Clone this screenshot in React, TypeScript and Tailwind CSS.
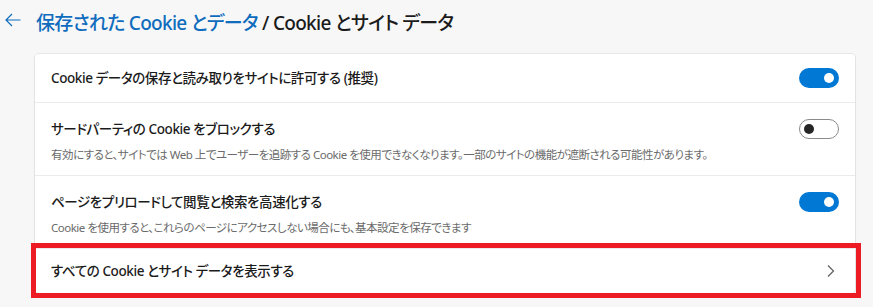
import React from "react";

const font = {
  fontFamily: '"Noto Sans", "Noto Sans CJK JP", sans-serif',
};

function Toggle({ on }: { on: boolean }) {
  return on ? (
    <div className="flex h-[20px] w-[40px] items-center justify-end rounded-full bg-[#0078d4] pr-[5px]">
      <div className="h-[10px] w-[10px] rounded-full bg-white" />
    </div>
  ) : (
    <div className="flex h-[20px] w-[40px] items-center rounded-full border border-[#8a8a8a] bg-white pl-[4px]">
      <div className="h-[10px] w-[10px] rounded-full bg-[#262626]" />
    </div>
  );
}

export default function App() {
  return (
    <div
      className="h-[307px] w-full overflow-hidden bg-[#f7f7f7] text-[#1b1b1b] [font-feature-settings:'palt']"
      style={font}
    >
      <div className="flex h-[42px] items-center">
        <svg
          width="16"
          height="14"
          viewBox="0 0 16 14"
          className="ml-[5px] mt-[-2px]"
          fill="none"
          stroke="#0f6cbd"
          strokeWidth="1.2"
        >
          <path d="M15.5 7H1M7 1L1 7l6 6" />
        </svg>
        <div className="ml-[15px] mt-[3px] text-[19px] font-medium leading-[28px] tracking-[-0.7px]">
          <span className="text-[#0f6cbd]">保存された Cookie とデータ</span>
          <span className="text-[#1b1b1b]"> / Cookie とサイト データ</span>
        </div>
      </div>

      <div className="ml-[35px] mt-[12px] w-[820px] rounded-[4px] bg-white shadow-[0_0_0_1px_rgba(0,0,0,0.06),0_1px_2px_rgba(0,0,0,0.08)]">
        <div className="flex h-[48px] items-center justify-between pl-[16px] pr-[16px]">
          <span className="text-[13.5px] font-medium leading-[20px] tracking-[-0.4px]">
            Cookie データの保存と読み取りをサイトに許可する (推奨)
          </span>
          <Toggle on />
        </div>

        <div className="border-t border-[#ebebeb] pb-[12px] pl-[16px] pr-[16px] pt-[16px]">
          <div className="flex h-[20px] items-center justify-between">
            <span className="text-[13.5px] font-medium leading-[20px] tracking-[-0.4px]">
              サードパーティの Cookie をブロックする
            </span>
            <Toggle on={false} />
          </div>
          <div className="mt-[8px] text-[11.5px] leading-[16px] tracking-[-0.5px] text-[#6b6b6b]">
            有効にすると、サイトでは Web 上でユーザーを追跡する Cookie
            を使用できなくなります。一部のサイトの機能が遮断される可能性があります。
          </div>
        </div>

        <div className="border-t border-[#ebebeb] pb-[12px] pl-[16px] pr-[16px] pt-[16px]">
          <div className="flex h-[20px] items-center justify-between">
            <span className="text-[13.5px] font-medium leading-[20px] tracking-[-0.4px]">
              ページをプリロードして閲覧と検索を高速化する
            </span>
            <Toggle on />
          </div>
          <div className="mt-[8px] text-[11.5px] leading-[16px] tracking-[-0.5px] text-[#6b6b6b]">
            Cookie
            を使用すると、これらのページにアクセスしない場合にも、基本設定を保存できます
          </div>
        </div>

        <div className="relative flex h-[45px] items-center justify-between border-t border-[#ebebeb] pl-[16px] pr-[20px]">
          <span className="text-[13.5px] font-medium leading-[20px] tracking-[-0.4px]">
            すべての Cookie とサイト データを表示する
          </span>
          <svg
            width="8"
            height="12"
            viewBox="0 0 8 12"
            fill="none"
            stroke="#5f5f5f"
            strokeWidth="1.2"
          >
            <path d="M1 0.5L6.5 6L1 11.5" />
          </svg>
          <div className="pointer-events-none absolute -bottom-[5px] -left-[4px] -right-[6px] -top-[6px] border-[5px] border-[#ed1c24]" />
        </div>
      </div>
    </div>
  );
}
